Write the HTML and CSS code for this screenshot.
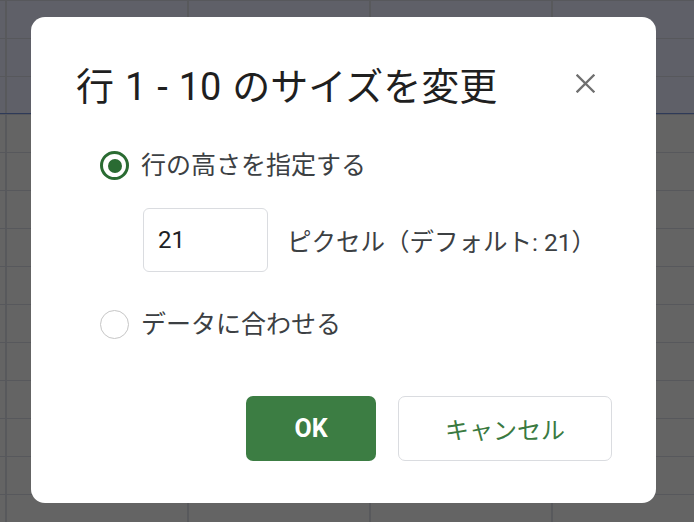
FILE: index.html
```html
<!DOCTYPE html>
<html lang="ja">
<head>
<meta charset="utf-8">
<title>行 1 - 10 のサイズを変更</title>
<link rel="stylesheet" href="styles.css">
</head>
<body>
<div class="sheet">
  <div class="dialog" role="dialog" aria-labelledby="dlg-title">
    <div class="dialog-header">
      <h1 class="dialog-title" id="dlg-title">行 1 - 10 のサイズを変更</h1>
      <button class="close-btn" aria-label="閉じる">
        <svg width="19" height="19" viewBox="0 0 19 19" aria-hidden="true">
          <path d="M1.5 1.5 L17.5 17.5 M17.5 1.5 L1.5 17.5" stroke="#6f6f6f" stroke-width="2.3" stroke-linecap="square" fill="none"/>
        </svg>
      </button>
    </div>
    <div class="options">
      <label class="option option-first">
        <span class="radio radio-checked"><span class="radio-dot"></span></span>
        <span class="option-label">行の高さを指定する</span>
      </label>
      <div class="size-row">
        <div class="size-input">21</div>
        <span class="size-hint">ピクセル（デフォルト: 21）</span>
      </div>
      <label class="option option-second">
        <span class="radio"></span>
        <span class="option-label">データに合わせる</span>
      </label>
    </div>
    <div class="dialog-footer">
      <button class="btn btn-primary">OK</button>
      <button class="btn btn-secondary">キャンセル</button>
    </div>
  </div>
</div>
</body>
</html>
```

FILE: styles.css
```css
* { box-sizing: border-box; }

html, body {
  margin: 0;
  padding: 0;
}

body {
  width: 694px;
  height: 522px;
  overflow: hidden;
  font-family: "Roboto", "Noto Sans CJK JP", sans-serif;
}

.sheet {
  width: 694px;
  height: 522px;
  padding: 17px 0 0 31px;
  background:
    linear-gradient(to bottom, transparent 113px, #2e3a58 113px, #2e3a58 114px, transparent 114px),
    repeating-linear-gradient(to bottom, #57585c 0 1px, transparent 1px 38px),
    repeating-linear-gradient(to right, #58595c 0 2px, transparent 2px 182px) 5px 0,
    linear-gradient(to bottom, #5f6068 0 113px, #646464 113px);
}

.dialog {
  width: 625px;
  height: 486px;
  background: #ffffff;
  border-radius: 14px;
  padding: 45px 44px 42px 45px;
  display: flex;
  flex-direction: column;
}

.dialog-header {
  display: flex;
  align-items: center;
  justify-content: space-between;
  height: 48px;
  margin-right: 7px;
}

.dialog-title {
  margin: 0;
  font-family: "Roboto", "Noto Sans CJK JP", sans-serif;
  font-weight: 400;
  font-size: 38px;
  line-height: 48px;
  word-spacing: 1.5px;
  color: #1f1f1f;
  white-space: nowrap;
  padding-top: 2px;
}

.close-btn {
  width: 40px;
  height: 40px;
  border: 0;
  padding: 0;
  background: transparent;
  display: flex;
  align-items: center;
  justify-content: center;
  margin-bottom: 5px;
}

.close-btn svg { display: block; }

.options {
  display: flex;
  flex-direction: column;
  padding-left: 24px;
}

.option {
  display: flex;
  align-items: center;
  gap: 12px;
  height: 29px;
}

.option-first { margin-top: 41px; }
.option-second { margin-top: 38px; }

.radio {
  width: 29px;
  height: 29px;
  border-radius: 50%;
  border: 1.5px solid #c6c6c6;
  display: flex;
  align-items: center;
  justify-content: center;
  flex: none;
}

.radio-checked {
  border: 3px solid #2a6b32;
}

.radio-dot {
  width: 14px;
  height: 14px;
  border-radius: 50%;
  background: #2a6b32;
}

.option-label {
  font-size: 25px;
  line-height: 29px;
  color: #3c4043;
  white-space: nowrap;
}

.size-row {
  display: flex;
  align-items: center;
  gap: 19px;
  margin-top: 28px;
  margin-left: 43px;
}

.size-input {
  width: 125px;
  height: 64px;
  border: 1px solid #dadce0;
  border-radius: 6px;
  padding-left: 14px;
  display: flex;
  align-items: center;
  font-size: 24px;
  color: #202124;
}

.size-hint {
  font-size: 24.5px;
  color: #3c4043;
  white-space: nowrap;
}

.dialog-footer {
  margin-top: auto;
  display: flex;
  justify-content: flex-end;
  gap: 22px;
}

.btn {
  height: 65px;
  border-radius: 7px;
  font-family: "Roboto", "Noto Sans CJK JP", sans-serif;
  font-size: 24px;
  padding: 0;
  cursor: pointer;
}

.btn-primary {
  width: 130px;
  background: #3c7d43;
  border: 0;
  color: #ffffff;
  font-weight: 700;
  font-size: 25px;
}

.btn-secondary {
  width: 214px;
  background: #ffffff;
  border: 1px solid #dadce0;
  color: #3a7a41;
  font-weight: 400;
}
```
